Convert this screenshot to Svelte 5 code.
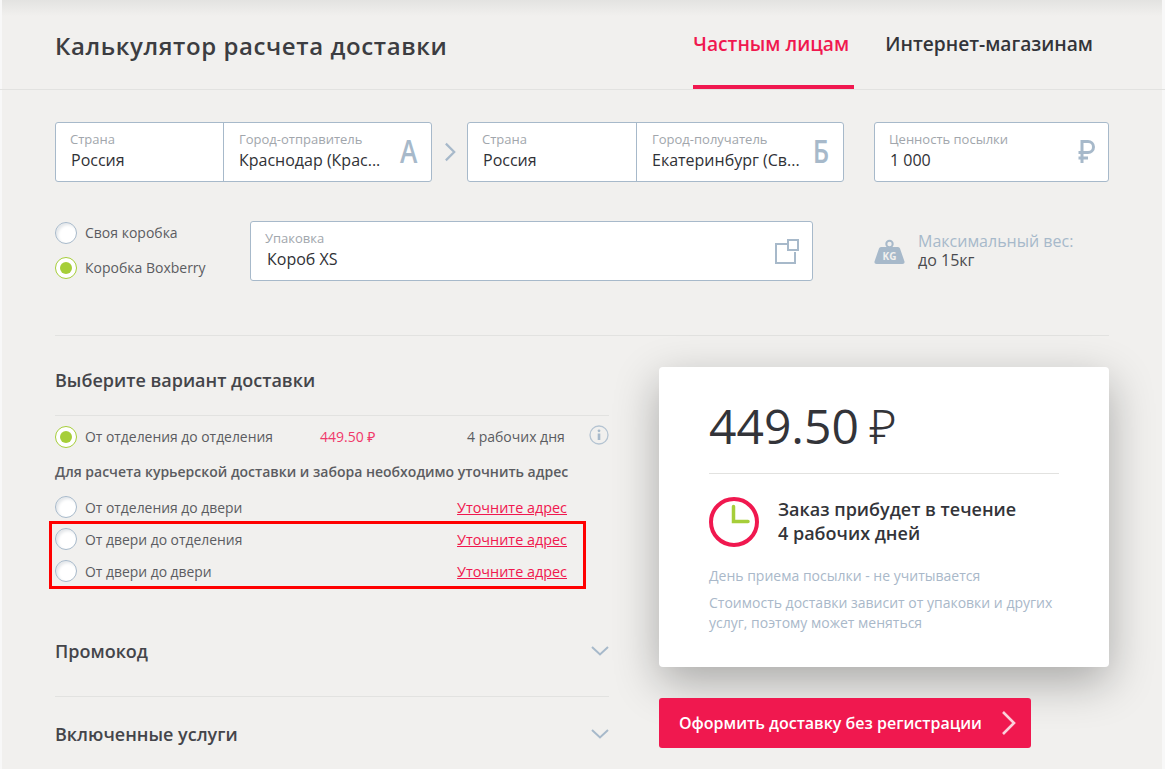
<script>
  const options = [
    { label: "От отделения до двери" },
    { label: "От двери до отделения" },
    { label: "От двери до двери" },
  ];
</script>

<div class="page">
  <header class="top">
    <h1>Калькулятор расчета доставки</h1>
    <nav class="tabs">
      <span class="tab active">Частным лицам</span>
      <span class="tab">Интернет-магазинам</span>
    </nav>
  </header>

  <section class="fields">
    <div class="box route">
      <div class="cell country">
        <span class="cap">Страна</span>
        <span class="val">Россия</span>
      </div>
      <div class="cell city">
        <span class="cap">Город-отправитель</span>
        <span class="val">Краснодар (Крас...</span>
        <span class="mark">А</span>
      </div>
    </div>
    <svg class="arrow" width="14" height="22" viewBox="0 0 14 22">
      <path d="M2 2l9 9-9 9" fill="none" stroke="#a7b9ca" stroke-width="2.4" />
    </svg>
    <div class="box route dest">
      <div class="cell country">
        <span class="cap">Страна</span>
        <span class="val">Россия</span>
      </div>
      <div class="cell city">
        <span class="cap">Город-получатель</span>
        <span class="val">Екатеринбург (Св...</span>
        <span class="mark">Б</span>
      </div>
    </div>
    <div class="box worth">
      <div class="cell">
        <span class="cap">Ценность посылки</span>
        <span class="val">1 000</span>
        <svg class="rub" width="18" height="26" viewBox="0 0 18 26">
          <path d="M5 24V2.500h6a5.500 5.500 0 0 1 0 11H1.500M1.500 19H11" fill="none" stroke="#a7b9ca" stroke-width="3" />
        </svg>
      </div>
    </div>
  </section>

  <section class="packing">
    <div class="kinds">
      <label class="radio-line"><span class="radio"></span>Своя коробка</label>
      <label class="radio-line"><span class="radio on"></span>Коробка Boxberry</label>
    </div>
    <div class="box pack">
      <div class="cell">
        <span class="cap">Упаковка</span>
        <span class="val">Короб XS</span>
        <svg class="boxes" width="24" height="25" viewBox="0 0 24 25">
          <path d="M12 5H1v19h19V13" fill="none" stroke="#a7b9ca" stroke-width="2" />
          <rect x="13" y="1" width="10" height="10" fill="none" stroke="#a7b9ca" stroke-width="2" />
        </svg>
      </div>
    </div>
    <div class="weight">
      <svg width="31" height="26" viewBox="0 0 31 26">
        <circle cx="15.500" cy="5" r="3.200" fill="none" stroke="#a7b9ca" stroke-width="2" />
        <path d="M7 8h17q1.500 0 2 1.500l4.500 13q.5 2.500-2 2.500H2.500q-2.500 0-2-2.500l4.500-13Q5.500 8 7 8z" fill="#a7b9ca" />
        <text x="15.500" y="21" text-anchor="middle" class="kg">KG</text>
      </svg>
      <div class="weight-text">
        <span class="weight-cap">Максимальный вес:</span>
        <span class="weight-val">до 15кг</span>
      </div>
    </div>
  </section>

  <section class="lower">
    <div class="left">
      <h2>Выберите вариант доставки</h2>
      <div class="row first">
        <span class="radio on"></span>
        <span class="row-label">От отделения до отделения</span>
        <span class="price">449.50 ₽</span>
        <span class="days">4 рабочих дня</span>
        <svg class="info" width="20" height="20" viewBox="0 0 20 20">
          <circle cx="10" cy="10" r="9" fill="none" stroke="#b5c4d2" stroke-width="1.300" />
          <circle cx="10" cy="5.800" r="1.400" fill="#a7b9ca" />
          <rect x="8.700" y="8.500" width="2.600" height="6.500" fill="#a7b9ca" />
        </svg>
      </div>
      <p class="hint">Для расчета курьерской доставки и забора необходимо уточнить адрес</p>
      <div class="rows">
        {#each options as option}
          <div class="row">
            <span class="radio"></span>
            <span class="row-label">{option.label}</span>
            <a class="specify" href="/">Уточните адрес</a>
          </div>
        {/each}
        <div class="flag"></div>
      </div>
      <div class="fold promo">
        <span>Промокод</span>
        <svg width="18" height="10" viewBox="0 0 18 10"><path d="M1 1l8 7.500L17 1" fill="none" stroke="#a7b9ca" stroke-width="2" /></svg>
      </div>
      <div class="fold services">
        <span>Включенные услуги</span>
        <svg width="18" height="10" viewBox="0 0 18 10"><path d="M1 1l8 7.500L17 1" fill="none" stroke="#a7b9ca" stroke-width="2" /></svg>
      </div>
    </div>

    <div class="right">
      <div class="card">
        <div class="sum">449.50 <span class="sum-cur">₽</span></div>
        <div class="eta">
          <svg width="50" height="50" viewBox="0 0 50 50">
            <circle cx="25" cy="25" r="23" fill="none" stroke="#f0184f" stroke-width="4" />
            <path d="M24.500 9.500v15H39" fill="none" stroke="#a6ce39" stroke-width="3.500" stroke-linecap="round" />
          </svg>
          <div class="eta-text">Заказ прибудет в течение<br />4 рабочих дней</div>
        </div>
        <p class="note">День приема посылки - не учитывается</p>
        <p class="note">Стоимость доставки зависит от упаковки и других услуг, поэтому может меняться</p>
      </div>
      <button class="go">
        Оформить доставку без регистрации
        <svg width="16" height="26" viewBox="0 0 16 26"><path d="M2 2l11 11L2 24" fill="none" stroke="#fbd0db" stroke-width="2.600" /></svg>
      </button>
    </div>
  </section>
</div>

<style>
  :global(body) {
    margin: 0;
    background: #f1f0ee;
    overflow: hidden;
  }

  .page {
    height: 769px;
    overflow: hidden;
    font-family: "Open Sans", "Noto Sans", sans-serif;
    font-size: 14px;
    color: #4a4b4f;
    background: linear-gradient(#e3e3e1 0, #f1f0ee 16px);
    box-shadow:
      inset 2px 0 0 #f8f8f8,
      inset -3px 0 0 #f8f8f8;
  }

  .top {
    height: 90px;
    box-sizing: border-box;
    padding: 0 72px 0 55px;
    display: flex;
    justify-content: space-between;
    border-bottom: 1px solid #e2e2e0;
  }

  h1 {
    margin: 29px 0 0;
    font-size: 24px;
    line-height: 34px;
    font-weight: 600;
    letter-spacing: 0.6px;
    color: #3c3d41;
  }

  .tabs {
    display: flex;
    gap: 31px;
  }

  .tab {
    box-sizing: border-box;
    height: 89px;
    padding-top: 30px;
    font-size: 19.2px;
    line-height: 28px;
    font-weight: 600;
    color: #333439;
    white-space: nowrap;
  }

  .tab.active {
    color: #f0184f;
    width: 161px;
    border-bottom: 4px solid #f0184f;
  }

  .fields {
    display: flex;
    align-items: center;
    padding: 32px 56px 0 55px;
  }

  .box {
    box-sizing: border-box;
    height: 60px;
    display: flex;
    background: #fff;
    border: 1px solid #a7b9ca;
    border-radius: 3px;
  }

  .route {
    width: 377px;
  }

  .arrow {
    margin: 0 10px 0 12px;
    width: 13px;
  }

  .worth {
    width: 235px;
    margin-left: 30px;
  }

  .cell {
    position: relative;
    box-sizing: border-box;
    padding: 8px 14px 0;
    flex: 1;
    min-width: 0;
  }

  .country {
    flex: 0 0 168px;
    border-right: 1px solid #a7b9ca;
  }

  .dest .country {
    flex-basis: 169px;
  }

  .city {
    padding-left: 15px;
  }

  .cap {
    display: block;
    font-size: 13px;
    line-height: 17px;
    color: #a1a6ac;
  }

  .val {
    display: block;
    margin: 1px 0 0 1px;
    font-size: 16px;
    line-height: 22px;
    color: #303136;
    white-space: nowrap;
  }

  .city .val {
    margin-left: 0;
  }

  .pack .val {
    margin-left: 2px;
  }

  .mark {
    position: absolute;
    right: 12px;
    top: 8px;
    font-size: 32px;
    line-height: 40px;
    font-weight: 600;
    color: #a7b9ca;
    transform: scaleX(0.82);
  }

  .rub {
    position: absolute;
    right: 13px;
    top: 16px;
  }

  .packing {
    display: flex;
    padding: 39px 0 0 55px;
  }

  .kinds {
    width: 195px;
    display: flex;
    flex-direction: column;
    gap: 13px;
    padding-top: 1px;
  }

  .radio-line {
    display: flex;
    align-items: flex-start;
    gap: 8px;
    height: 22px;
    font-size: 14px;
    line-height: 21px;
    color: #5b5c61;
  }

  .radio {
    box-sizing: border-box;
    flex: none;
    position: relative;
    width: 22px;
    height: 22px;
    border-radius: 50%;
    background: #fff;
    border: 1px solid #a7b9ca;
    box-shadow: inset 2px 2px 3px #e4e7ea;
  }

  .radio.on {
    border-color: #a6ce39;
    box-shadow: none;
  }

  .radio.on::after {
    content: "";
    position: absolute;
    left: 4px;
    top: 4px;
    width: 12px;
    height: 12px;
    border-radius: 50%;
    background: #a6ce39;
  }

  .pack {
    width: 563px;
  }

  .boxes {
    position: absolute;
    right: 13px;
    top: 17px;
  }

  .weight {
    display: flex;
    align-items: center;
    gap: 13px;
    margin-left: 61px;
    height: 60px;
  }

  .weight svg {
    margin-top: 2px;
  }

  .weight-text {
    display: flex;
    flex-direction: column;
  }

  .weight-cap {
    font-size: 16px;
    line-height: 20px;
    color: #a7b9ca;
  }

  .weight-val {
    font-size: 16px;
    line-height: 18px;
    margin-bottom: 2px;
    color: #4a4b4f;
  }

  .lower {
    display: grid;
    grid-template-columns: 554px 450px;
    gap: 50px;
    margin: 54px 56px 0 55px;
    padding-top: 31px;
    border-top: 1px solid #e2e2e0;
  }

  h2 {
    margin: 0;
    font-size: 18px;
    line-height: 26px;
    height: 48px;
    font-weight: 600;
    color: #44454a;
    border-bottom: 1px solid #e2e2e0;
  }

  .row {
    display: flex;
    align-items: center;
    height: 32px;
    color: #5b5c61;
    font-size: 14px;
  }

  .row .radio {
    margin-right: 8px;
  }

  .row.first {
    height: 41px;
    position: relative;
  }

  .row-label {
    width: 235px;
    font-size: 13.9px;
  }

  .price {
    width: 147px;
    color: #f0386a;
    font-size: 14px;
  }

  .days {
    white-space: nowrap;
  }

  .info {
    position: absolute;
    right: 0;
    top: 9px;
  }

  .hint {
    margin: 0;
    height: 34px;
    line-height: 30px;
    font-size: 14px;
    font-weight: 600;
    color: #5b5c61;
    white-space: nowrap;
  }

  .rows {
    position: relative;
  }

  .specify {
    margin-left: auto;
    margin-right: 42px;
    color: #f0184f;
    font-size: 14.4px;
    text-decoration: underline;
  }

  .flag {
    position: absolute;
    left: -6px;
    right: 23px;
    top: 30px;
    height: 68px;
    box-sizing: border-box;
    border: 3px solid #ff0000;
  }

  .fold {
    box-sizing: border-box;
    display: flex;
    justify-content: space-between;
    align-items: center;
    font-size: 18px;
    font-weight: 600;
    color: #44454a;
  }

  .promo {
    height: 110px;
    padding-top: 19px;
    border-bottom: 1px solid #e2e2e0;
  }

  .services {
    height: 74px;
  }

  .card {
    box-sizing: border-box;
    height: 300px;
    padding: 25px 50px 0;
    background: #fff;
    border-radius: 4px;
    box-shadow: 0 15px 45px rgba(0, 0, 0, 0.3);
  }

  .sum {
    height: 82px;
    box-sizing: border-box;
    font-size: 48px;
    line-height: 68px;
    color: #333439;
    border-bottom: 1px solid #e2e2e0;
  }

  .sum-cur {
    margin-left: -2px;
    font-weight: 300;
  }

  .eta {
    display: flex;
    align-items: center;
    gap: 19px;
    margin-top: 23px;
  }

  .eta-text {
    margin-top: -3px;
    font-size: 18px;
    line-height: 24px;
    font-weight: 600;
    color: #333439;
  }

  .note {
    margin: 0;
    font-size: 14px;
    line-height: 20px;
    color: #a9b8c9;
  }

  .eta + .note {
    margin-top: 19px;
    margin-bottom: 7px;
  }

  .go {
    box-sizing: border-box;
    display: flex;
    align-items: center;
    justify-content: space-between;
    width: 372px;
    height: 50px;
    margin-top: 31px;
    padding: 0 14px 0 20px;
    border: 0;
    border-radius: 3px;
    background: #f0184f;
    color: #fff;
    font-family: inherit;
    font-size: 16px;
    font-weight: 600;
  }

  .kg {
    font-family: "Open Sans", sans-serif;
    font-size: 10px;
    font-weight: 700;
    fill: #f1f0ee;
  }
</style>
